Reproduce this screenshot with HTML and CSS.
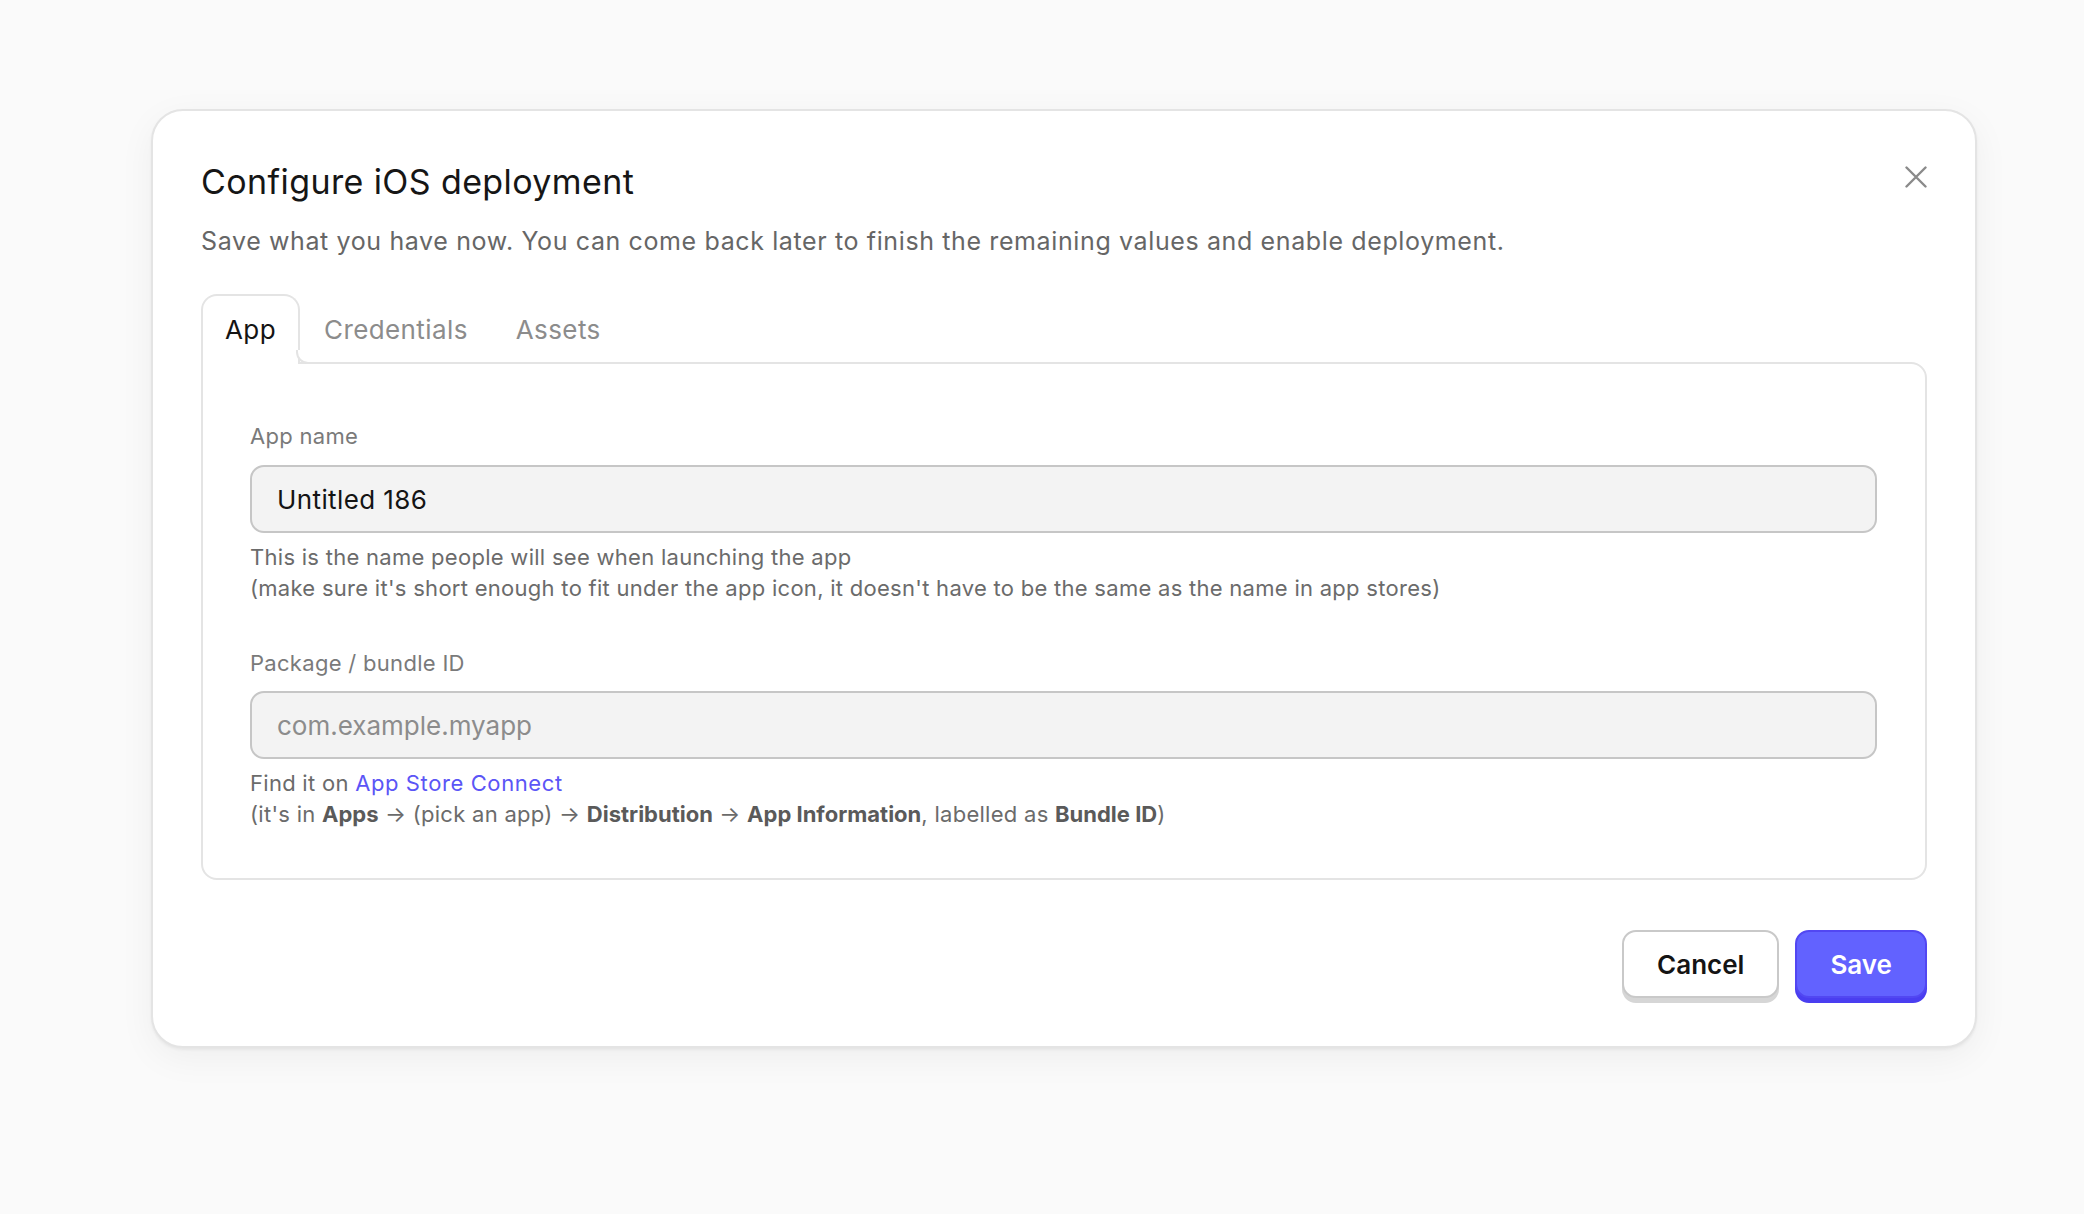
FILE: index.html
```html
<!DOCTYPE html>
<html lang="en">
<head>
<meta charset="utf-8">
<title>Configure iOS deployment</title>
<link rel="stylesheet" href="styles.css">
</head>
<body>
<div class="dialog">
  <button class="close" aria-label="Close">
    <svg width="22" height="22" viewBox="0 0 22 22"><path d="M1.5 1.5 L20.5 20.5 M20.5 1.5 L1.5 20.5" stroke="#8a8a8a" stroke-width="2.4" stroke-linecap="round" fill="none"/></svg>
  </button>
  <h1 class="title">Configure iOS deployment</h1>
  <p class="desc">Save what you have now. You can come back later to finish the remaining values and enable deployment.</p>
  <div class="tabs">
    <div class="tab active">App</div>
    <div class="tab">Credentials</div>
    <div class="tab">Assets</div>
  </div>
  <div class="panel">
    <div class="field">
      <div class="label">App name</div>
      <div class="input"><span class="value">Untitled 186</span></div>
      <div class="help">This is the name people will see when launching the app<br>(make sure it's short enough to fit under the app icon, it doesn't have to be the same as the name in app stores)</div>
    </div>
    <div class="field second">
      <div class="label">Package / bundle ID</div>
      <div class="input"><span class="placeholder">com.example.myapp</span></div>
      <div class="help">Find it on <a class="link">App Store Connect</a><br>(it's in <b>Apps</b> → (pick an app) → <b>Distribution</b> → <b>App Information</b>, labelled as <b>Bundle ID</b>)</div>
    </div>
  </div>
  <div class="actions">
    <button class="btn cancel">Cancel</button>
    <button class="btn save">Save</button>
  </div>
</div>
</body>
</html>
```

FILE: styles.css
```css
* { box-sizing: border-box; }
html, body { margin: 0; }
body {
  background: #fafafa;
  font-family: Inter, "Noto Sans", sans-serif;
  padding: 109px 0 0 151px;
  min-height: 1214px;
}
.dialog {
  position: relative;
  width: 1826px;
  background: #fff;
  border: 2px solid #e4e4e4;
  border-radius: 32px;
  padding: 51px 48px 48px 48px;
  box-shadow: 0 10px 36px rgba(0,0,0,0.05), 0 2px 3px rgba(0,0,0,0.05);
}
.close {
  position: absolute;
  top: 55px;
  right: 48px;
  width: 22px;
  height: 22px;
  padding: 0;
  border: 0;
  background: none;
  display: flex;
}
.title {
  margin: 0;
  font-size: 34px;
  line-height: 40px;
  font-weight: 400;
  color: #161616;
  letter-spacing: 0.4px;
}
.desc {
  margin: 23px 0 0 0;
  font-size: 25px;
  line-height: 32px;
  color: #666;
  letter-spacing: 0.62px;
}
.tabs {
  display: flex;
  margin-top: 37px;
  position: relative;
  z-index: 2;
  margin-bottom: -2px;
}
.tab {
  position: relative;
  padding: 2px 22px 0 22px;
  line-height: 64px;
  height: 70px;
  font-size: 26px;
  color: #8c8c8c;
  border: 2px solid transparent;
  border-bottom: 0;
  letter-spacing: 0.4px;
}
.tab.active {
  color: #141414;
  background: #fff;
  border-color: #e4e4e4;
  border-radius: 16px 16px 0 0;
}
.tab.active::after {
  content: "";
  position: absolute;
  left: 100%;
  margin-left: -2px;
  bottom: 0;
  width: 14px;
  height: 12px;
  border-left: 2px solid #e4e4e4;
  border-bottom: 2px solid #e4e4e4;
  border-bottom-left-radius: 12px;
  background: #fff;
}
.panel {
  border: 2px solid #e4e4e4;
  border-radius: 0 16px 16px 16px;
  padding: 57px 48px 48px 47px;
}
.field.second { margin-top: 44px; }
.label {
  font-size: 22px;
  line-height: 31px;
  color: #7a7a7a;
  letter-spacing: 0.3px;
}
.input {
  margin-top: 13px;
  height: 68px;
  border: 2px solid #c6c6c6;
  border-radius: 14px;
  background: #f3f3f3;
  padding: 0 25px;
  display: flex;
  align-items: center;
  font-size: 26px;
}
.field.second .input { margin-top: 12px; }
.value { color: #141414; letter-spacing: 0.4px; }
.placeholder { color: #8c8c8c; }
.help {
  margin-top: 9px;
  font-size: 22px;
  line-height: 31px;
  color: #6b6b6b;
  letter-spacing: 0.28px;
}
.help b { font-weight: 700; color: #5a5a5a; letter-spacing: 0; }
.link { color: #5b55f6; text-decoration: none; letter-spacing: 0.6px; }
.actions {
  display: flex;
  justify-content: flex-end;
  gap: 16px;
  margin-top: 50px;
}
.btn {
  height: 68px;
  padding: 0 33px;
  border-radius: 14px;
  font-family: Inter, "Noto Sans", sans-serif;
  font-size: 26px;
  font-weight: 600;
  border: 2px solid;
}
.cancel {
  background: #fff;
  color: #141414;
  border-color: #c9c9c9;
  box-shadow: 0 5px 0 #d6d6d6;
}
.save {
  background: #6262ff;
  color: #fff;
  border-color: #5247f2;
  box-shadow: 0 5px 0 #4a3ef0;
}
```
